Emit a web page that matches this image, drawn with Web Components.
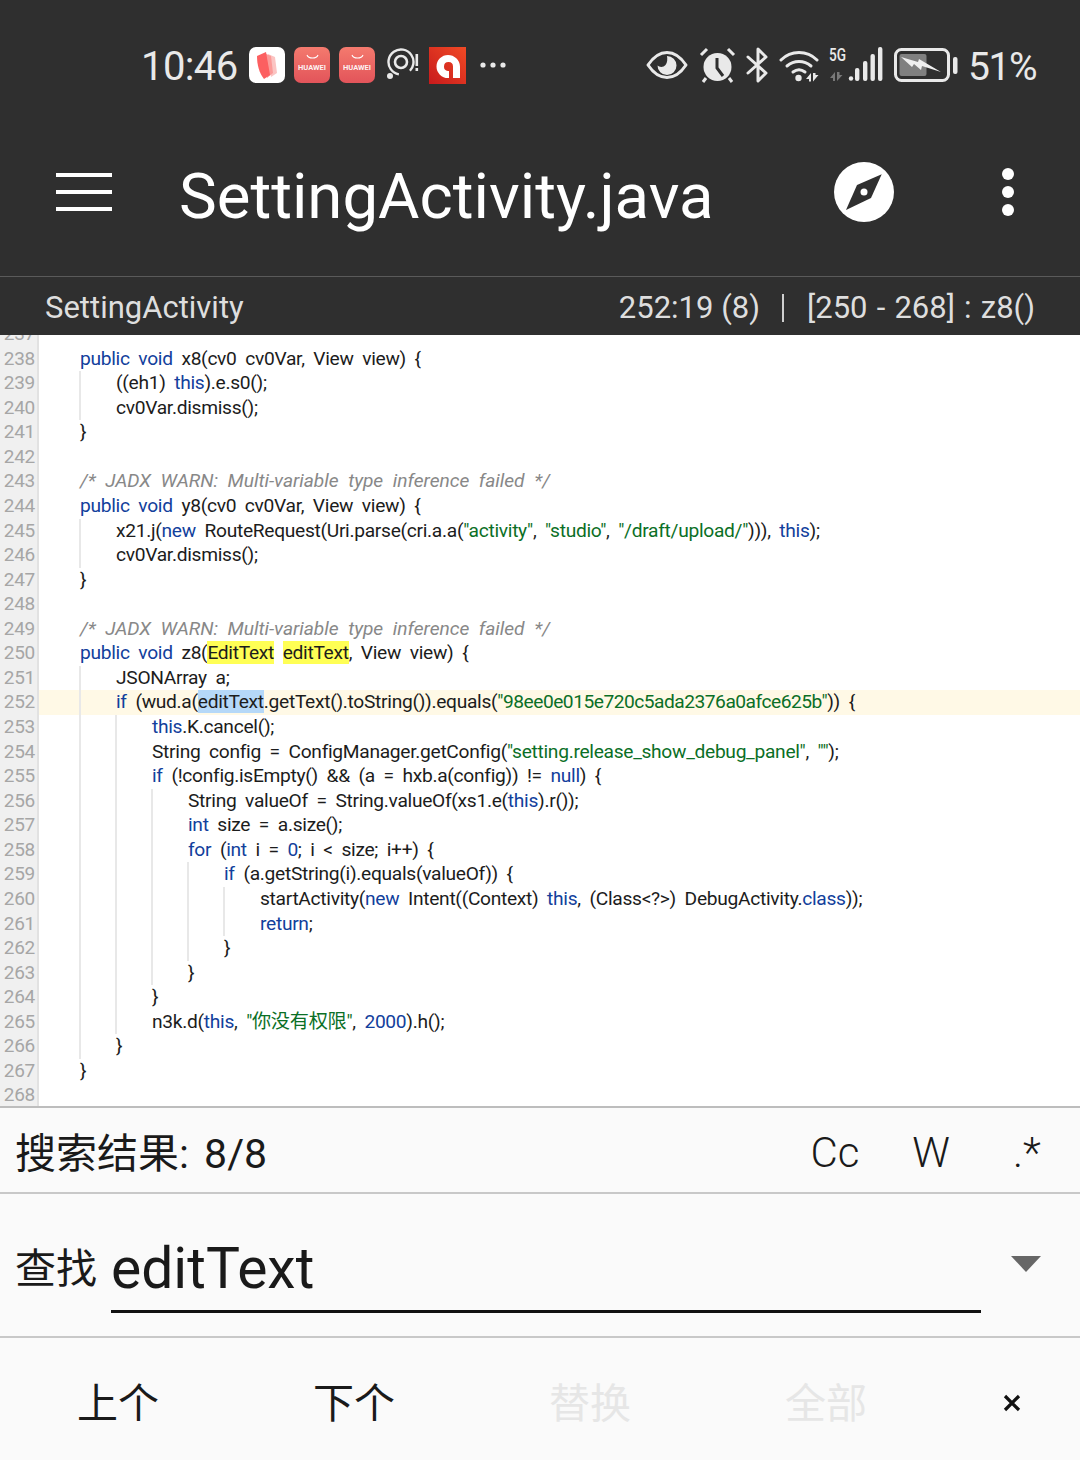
<!DOCTYPE html>
<html>
<head>
<meta charset="utf-8">
<title>SettingActivity.java</title>
<style>
  html, body { margin: 0; padding: 0; background: #fff; }
  body { width: 1080px; height: 1460px; overflow: hidden; display: flex; flex-direction: column; font-family: Roboto, "Noto Sans CJK SC", sans-serif; }
</style>
</head>
<body>
<status-bar></status-bar>
<app-toolbar>SettingActivity.java</app-toolbar>
<symbol-bar></symbol-bar>
<code-view></code-view>
<search-panel></search-panel>

<script>
(function() {
  const sans = 'Roboto, "Noto Sans CJK SC", sans-serif';

  class StatusBar extends HTMLElement {
    constructor() {
      super();
      this.attachShadow({mode: 'open'});
      const huawei = `
        <svg class="app" width="36" height="36" viewBox="0 0 36 36">
          <defs><linearGradient id="hw" x1="0" y1="0" x2="0" y2="1"><stop offset="0" stop-color="#f47a6e"/><stop offset="1" stop-color="#e2545a"/></linearGradient></defs>
          <rect width="36" height="36" rx="7" fill="url(#hw)"/>
          <path d="M13 8c1.500 4 9.500 4 11 0" fill="none" stroke="#fff" stroke-width="1.100"/>
          <text x="18" y="23" text-anchor="middle" font-family="Roboto, sans-serif" font-size="7.500" font-weight="700" textLength="28" fill="#fff" opacity=".92">HUAWEI</text>
        </svg>`;
      this.shadowRoot.innerHTML = `
        <style>
          :host { display: flex; align-items: center; justify-content: space-between; height: 130px; padding: 0 44px 0 141px; box-sizing: border-box; background: #2f2f2f; color: #e9e9e9; font-family: ${sans}; flex: none; }
          .group { display: flex; align-items: center; }
          .text { font-size: 40px; line-height: 48px; letter-spacing: -.6px; position: relative; top: 2px; }
          .pct { font-size: 39px; letter-spacing: -1.500px; }
          svg { display: block; }
          .time { width: 108px; }
          .app { margin-right: 9px; }
        </style>
        <div class="group">
          <span class="text time">10:46</span>
          <svg class="app" width="36" height="36" viewBox="0 0 36 36">
            <rect width="36" height="36" rx="7" fill="#fff"/>
            <path d="M19 7l7 3 2 16-6 4z" fill="#fbc4c2"/>
            <path d="M15 6l7 3 2 17-6 5z" fill="#fb9a98"/>
            <path d="M8 9l9-4 4 23-6 4c-5-6-7-15-7-23z" fill="#fc5f60"/>
          </svg>
          ${huawei}
          ${huawei}
          <svg width="32" height="34" viewBox="0 0 32 34" style="margin:0 10px 0 3px">
            <circle cx="14" cy="14" r="12.500" fill="none" stroke="#e9e9e9" stroke-width="2.400" stroke-dasharray="66 12" transform="rotate(100 14 14)"/>
            <circle cx="14" cy="14" r="6" fill="none" stroke="#e9e9e9" stroke-width="2.600"/>
            <circle cx="3" cy="28" r="3" fill="#e9e9e9"/>
            <rect x="28.500" y="6" width="2.600" height="12" fill="#e9e9e9"/>
            <rect x="28.500" y="20" width="2.600" height="3" fill="#e9e9e9"/>
          </svg>
          <svg width="37" height="37" viewBox="0 0 37 37" style="margin-right:14px">
            <defs><linearGradient id="ad" x1="1" y1="0" x2="0" y2="1"><stop offset="0" stop-color="#f04a25"/><stop offset="1" stop-color="#c81a1c"/></linearGradient></defs>
            <rect width="37" height="37" fill="url(#ad)"/>
            <path d="M19 8a11.500 11.500 0 1 0 0 23h1v-7h-1a4.500 4.500 0 1 1 5-4.500V31h7V19.500A12 12 0 0 0 19 8z" fill="#fff"/>
          </svg>
          <svg width="26" height="6" viewBox="0 0 26 6">
            <circle cx="3" cy="3" r="2.600" fill="#e9e9e9"/><circle cx="13" cy="3" r="2.600" fill="#e9e9e9"/><circle cx="23" cy="3" r="2.600" fill="#e9e9e9"/>
          </svg>
        </div>
        <div class="group">
          <svg width="42" height="30" viewBox="0 0 42 30" style="margin-right:11px">
            <path d="M2 15C8 6 14 2.500 21 2.500S34 6 40 15C34 24 28 27.500 21 27.500S8 24 2 15z" fill="none" stroke="#e9e9e9" stroke-width="3" stroke-linejoin="round"/>
            <path d="M21 6a9.500 9.500 0 1 1-9.500 9.500c2 2 6 2 8-.5s2-6 1.500-9z" fill="#e9e9e9"/>
          </svg>
          <svg width="37" height="36" viewBox="0 0 37 36" style="margin-right:10px">
            <circle cx="18.500" cy="20" r="14" fill="#e9e9e9"/>
            <path d="M18 11v10l6 8" fill="none" stroke="#2f2f2f" stroke-width="3"/>
            <path d="M2 8l6-6M35 8l-6-6" stroke="#e9e9e9" stroke-width="3"/>
            <path d="M7 31l-3 4M30 31l3 4" stroke="#e9e9e9" stroke-width="3"/>
          </svg>
          <svg width="24" height="36" viewBox="0 0 24 36" style="margin-right:9px">
            <path d="M2 10l18 16-8 8V2l8 8L2 26" fill="none" stroke="#e9e9e9" stroke-width="3" stroke-linejoin="round" stroke-linecap="round"/>
          </svg>
          <svg width="41" height="34" viewBox="0 0 41 34" style="margin-right:9px">
            <path d="M2 12c10-10 26-10 36 0" fill="none" stroke="#e9e9e9" stroke-width="3" stroke-linecap="round"/>
            <path d="M8 18c7-6 17-6 24 0" fill="none" stroke="#e9e9e9" stroke-width="3" stroke-linecap="round"/>
            <path d="M14 24c4-3 8-3 12 0" fill="none" stroke="#e9e9e9" stroke-width="3" stroke-linecap="round"/>
            <circle cx="19.500" cy="30" r="3.200" fill="#e9e9e9"/>
            <path d="M32 33.500V25L27 31H30V33.500zM34 25v8.500L39.500 27H36.500V25z" fill="#e9e9e9"/>
          </svg>
          <svg width="54" height="46" viewBox="0 -5 54 46" style="margin-right:11px">
            <text x="0" y="14" font-family="Roboto, sans-serif" font-size="19" font-weight="500" textLength="17" lengthAdjust="spacingAndGlyphs" fill="#e9e9e9">5G</text>
            <path d="M6 34v-9L1 31H4V34zM8 25v9L13.500 28H10.500V25z" fill="#787878"/>
            <circle cx="22" cy="31.500" r="2.200" fill="#e9e9e9"/>
            <rect x="26" y="21" width="4.400" height="13" rx="2" fill="#e9e9e9"/>
            <rect x="34" y="14" width="4.400" height="20" rx="2" fill="#e9e9e9"/>
            <rect x="41.500" y="7" width="4.400" height="27" rx="2" fill="#e9e9e9"/>
            <rect x="49" y="0" width="4.400" height="34" rx="2" fill="#e9e9e9"/>
          </svg>
          <svg width="64" height="34" viewBox="0 0 64 34" style="margin-right:10px">
            <rect x="1.500" y="1.500" width="53" height="31" rx="6" fill="none" stroke="#e9e9e9" stroke-width="3"/>
            <rect x="5.500" y="6" width="27" height="22" rx="2" fill="#808080"/>
            <path d="M7 9L24 14 25 11 47 24 28 18 27 22 20 16 18 19z" fill="#efefef"/>
            <rect x="59" y="9" width="4.500" height="17" rx="2" fill="#e9e9e9"/>
          </svg>
          <span class="text pct">51%</span>
        </div>
      `;
    }
  }

  class AppToolbar extends HTMLElement {
    constructor() {
      super();
      this.attachShadow({mode: 'open'});
      this.shadowRoot.innerHTML = `
        <style>
          :host { display: flex; align-items: center; height: 146px; padding: 0 44px 22px 56px; box-sizing: border-box; background: #2f2f2f; color: #fff; font-family: ${sans}; flex: none; }
          .menu { width: 56px; display: flex; flex-direction: column; gap: 12.500px; margin-right: 67px; }
          .menu i { display: block; height: 4.500px; background: #fff; }
          .title { flex: 1; font-size: 63.500px; line-height: 72px; position: relative; top: 5px; white-space: nowrap; }
          svg { display: block; }
          .dots { margin-left: 108px; display: flex; flex-direction: column; gap: 6px; width: 12px; margin-right: 22px; }
          .dots i { width: 12px; height: 12px; border-radius: 50%; background: #fff; }
        </style>
        <div class="menu"><i></i><i></i><i></i></div>
        <div class="title"><slot></slot></div>
        <svg width="60" height="60" viewBox="0 0 60 60">
          <circle cx="30" cy="30" r="30" fill="#fff"/>
          <path d="M47.700 12.300L23 23 12 48 37 36z" fill="#2f2f2f"/>
          <circle cx="30" cy="30" r="3.500" fill="#fff"/>
        </svg>
        <div class="dots"><i></i><i></i><i></i></div>
      `;
    }
  }

  class SymbolBar extends HTMLElement {
    constructor() {
      super();
      this.attachShadow({mode: 'open'});
      this.shadowRoot.innerHTML = `
        <style>
          :host { display: flex; align-items: center; height: 59px; padding: 3px 45px 0 45px; border-top: 1px solid #5a5a5a; box-sizing: border-box; background: #2f2f2f; color: #dedede; font-family: ${sans}; font-size: 31px; flex: none; }
          .name { flex: 1; }
          .sep { width: 2px; height: 28px; background: #cfcfcf; margin: 0 23px 0 22px; }
          .range { word-spacing: 1.500px; }
        </style>
        <span class="name">SettingActivity</span>
        <span>252:19 (8)</span>
        <span class="sep"></span>
        <span class="range">[250 - 268] : z8()</span>
      `;
    }
  }

  // [indent level, source with k=keyword s=string c=comment h=match m=current match]
  const SOURCE = [
    [0, ''],
    [0, '<b class="k">public void</b> x8(cv0 cv0Var, View view) {'],
    [1, '((eh1) <b class="k">this</b>).e.s0();'],
    [1, 'cv0Var.dismiss();'],
    [0, '}'],
    [0, ''],
    [0, '<b class="c">/* JADX WARN: Multi-variable type inference failed */</b>'],
    [0, '<b class="k">public void</b> y8(cv0 cv0Var, View view) {'],
    [1, 'x21.j(<b class="k">new</b> RouteRequest(Uri.parse(cri.a.a(<b class="s">"activity"</b>, <b class="s">"studio"</b>, <b class="s">"/draft/upload/"</b>))), <b class="k">this</b>);'],
    [1, 'cv0Var.dismiss();'],
    [0, '}'],
    [0, ''],
    [0, '<b class="c">/* JADX WARN: Multi-variable type inference failed */</b>'],
    [0, '<b class="k">public void</b> z8(<b class="h">EditText</b> <b class="h">editText</b>, View view) {'],
    [1, 'JSONArray a;'],
    [1, '<b class="k">if</b> (wud.a(<b class="m">editText</b>.getText().toString()).equals(<b class="s hash">"98ee0e015e720c5ada2376a0afce625b"</b>)) {'],
    [2, '<b class="k">this</b>.K.cancel();'],
    [2, 'String config = ConfigManager.getConfig(<b class="s">"setting.release_show_debug_panel"</b>, <b class="s">""</b>);'],
    [2, '<b class="k">if</b> (!config.isEmpty() &amp;&amp; (a = hxb.a(config)) != <b class="k">null</b>) {'],
    [3, 'String valueOf = String.valueOf(xs1.e(<b class="k">this</b>).r());'],
    [3, '<b class="k">int</b> size = a.size();'],
    [3, '<b class="k">for</b> (<b class="k">int</b> i = <b class="k">0</b>; i &lt; size; i++) {'],
    [4, '<b class="k">if</b> (a.getString(i).equals(valueOf)) {'],
    [5, 'startActivity(<b class="k">new</b> Intent((Context) <b class="k">this</b>, (Class&lt;?&gt;) DebugActivity.<b class="k">class</b>));'],
    [5, '<b class="k">return</b>;'],
    [4, '}'],
    [3, '}'],
    [2, '}'],
    [2, 'n3k.d(<b class="k">this</b>, <b class="s">"你没有权限"</b>, <b class="k">2000</b>).h();'],
    [1, '}'],
    [0, '}'],
    [0, '']
  ];

  class CodeView extends HTMLElement {
    constructor() {
      super();
      this.attachShadow({mode: 'open'});
      const rows = SOURCE.map(([level, src], i) => {
        const num = 237 + i;
        const guides = '<i></i>'.repeat(level);
        const cur = num === 252 ? ' cur' : '';
        return `<div class="row${cur}"><span class="num">${num}</span><span class="src">${guides}<span class="txt">${src}</span></span></div>`;
      }).join('');
      this.shadowRoot.innerHTML = `
        <style>
          :host { display: block; flex: 1; min-height: 0; overflow: hidden; background: #fff; color: #1c1c1c; font-family: ${sans}; font-size: 19.200px; letter-spacing: -.3px; word-spacing: 4.200px; }
          .lines { margin-top: -13px; background: linear-gradient(to right, #f0f0f0 37px, #e2e2e2 37px, #e2e2e2 39px, transparent 39px); }
          .row { display: flex; height: 24.570px; line-height: 24.570px; white-space: nowrap; }
          .num { width: 35px; flex: none; padding-right: 4px; text-align: right; color: #a6a6a6; font-size: 19px; word-spacing: 0; }
          .src { flex: 1; display: flex; padding-left: 40px; }
          .cur .src { background: #fff9e6; }
          .src i { flex: none; width: 34px; border-left: 2px solid #e8e8e8; }
          .txt { margin-left: 1px; }
          .txt b { font-weight: inherit; }
          .k { color: #12409c; }
          .s { color: #0b6f26; }
          .hash { letter-spacing: -.5px; }
          .c { color: #888; font-style: italic; letter-spacing: -.05px; word-spacing: 5px; }
          .h { background: #ffff55; }
          .m { background: #b5d8f8; }
        </style>
        <div class="lines">${rows}</div>
      `;
    }
  }

  class SearchAction extends HTMLElement {
    constructor() {
      super();
      this.attachShadow({mode: 'open'});
      this.shadowRoot.innerHTML = `
        <style>
          :host { display: flex; align-items: center; justify-content: center; font-size: 41px; color: #1a1a1a; }
          :host([disabled]) { color: #e6e6e6; }
        </style>
        <slot></slot>
      `;
    }
  }

  class SearchPanel extends HTMLElement {
    constructor() {
      super();
      this.attachShadow({mode: 'open'});
      this.shadowRoot.innerHTML = `
        <style>
          :host { display: block; flex: none; height: 354px; background: #fafafa; color: #1a1a1a; font-family: ${sans}; border-top: 2px solid #bdbdbd; box-sizing: border-box; }
          .result { display: flex; align-items: center; height: 84px; padding-left: 15px; border-bottom: 2px solid #c8c8c8; font-size: 42px; }
          .result .label { flex: 1; word-spacing: 5px; font-size: 41px; }
          .opt { width: 96px; text-align: center; position: relative; top: 2px; font-weight: 300; }
          .find { display: flex; align-items: center; height: 144px; padding-left: 15px; border-bottom: 2px solid #c8c8c8; box-sizing: border-box; }
          .find .label { font-size: 41px; width: 96px; flex: none; }
          .input { width: 870px; height: 74px; margin-top: 19px; flex: none; border-bottom: 3.500px solid #111; font-size: 57px; line-height: 66px; box-sizing: content-box; }
          .arrow { margin-left: 30px; width: 0; height: 0; border-left: 15px solid transparent; border-right: 15px solid transparent; border-top: 16px solid #666; position: relative; top: -1px; }
          .actions { display: grid; grid-template-columns: repeat(4, 236px) 136px; height: 122px; padding-top: 2px; box-sizing: border-box; }
          .close { display: flex; align-items: center; justify-content: center; padding-top: 6px; }
          svg { display: block; }
        </style>
        <div class="result">
          <span class="label">搜索结果: 8/8</span>
          <span class="opt">Cc</span>
          <span class="opt">W</span>
          <span class="opt" style="margin-right:5px">.*</span>
        </div>
        <div class="find">
          <span class="label">查找</span>
          <div class="input">editText</div>
          <div class="arrow"></div>
        </div>
        <div class="actions">
          <search-action>上个</search-action>
          <search-action>下个</search-action>
          <search-action disabled>替换</search-action>
          <search-action disabled>全部</search-action>
          <div class="close">
            <svg width="18" height="18" viewBox="0 0 18 18"><path d="M2 2l14 14M16 2L2 16" stroke="#111" stroke-width="3.200"/></svg>
          </div>
        </div>
      `;
    }
  }

  window.customElements.define('status-bar', StatusBar);
  window.customElements.define('app-toolbar', AppToolbar);
  window.customElements.define('symbol-bar', SymbolBar);
  window.customElements.define('code-view', CodeView);
  window.customElements.define('search-action', SearchAction);
  window.customElements.define('search-panel', SearchPanel);
})();
</script>
</body>
</html>
